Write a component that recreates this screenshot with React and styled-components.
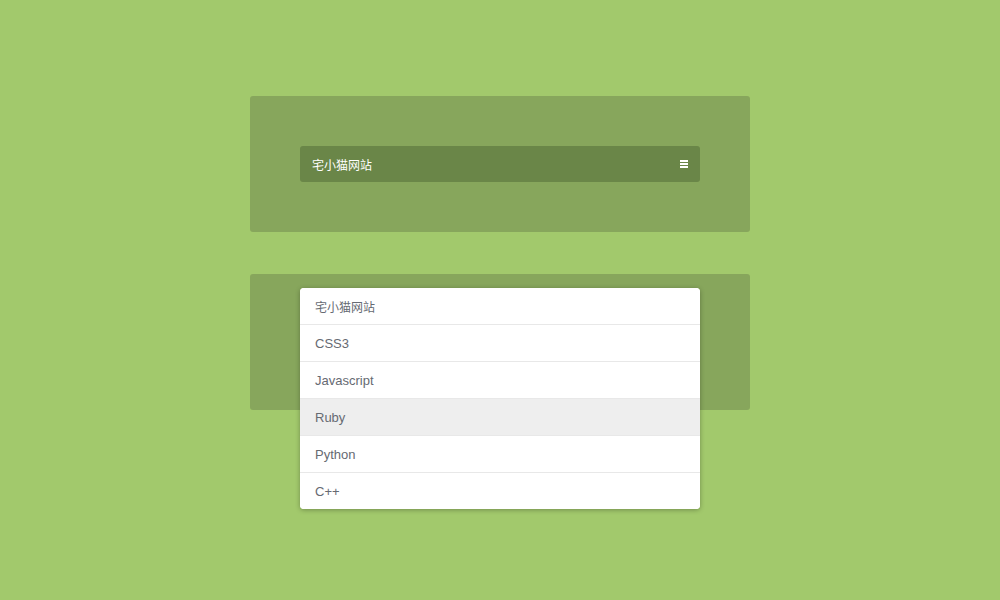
import React from 'react'
import styled, { createGlobalStyle } from 'styled-components'

const GlobalStyle = createGlobalStyle`
  html, body {
    margin: 0;
    padding: 0;
    background: #a2c96c;
    font-family: "Liberation Sans", Arial, "Noto Sans CJK SC", sans-serif;
  }
`

const Page = styled.div`
  width: 1000px;
  height: 600px;
  display: flex;
  flex-direction: column;
  align-items: center;
  padding-top: 96px;
  box-sizing: border-box;
  gap: 42px;
  overflow: hidden;
`

const Panel = styled.div`
  width: 500px;
  height: 136px;
  box-sizing: border-box;
  background: #87a65c;
  border-radius: 3px;
  padding: ${p => p.$top}px 50px 0;
  position: relative;
`

const NavBar = styled.div`
  height: 36px;
  background: #6a8648;
  border-radius: 3px;
  display: flex;
  align-items: center;
  justify-content: space-between;
  padding: 0 12px;
`

const Brand = styled.span`
  color: #fff;
  font-size: 12px;
  font-family: "Noto Sans CJK SC", sans-serif;
`

const Menu = styled.ul`
  list-style: none;
  margin: 0;
  padding: 0;
  background: #fff;
  border-radius: 4px;
  box-shadow: 0 1px 5px rgba(0, 0, 0, 0.3);
  overflow: hidden;
  position: relative;
  z-index: 2;
`

const Item = styled.li`
  height: 36px;
  display: flex;
  align-items: center;
  padding: 0 15px;
  color: #666a72;
  font-size: ${p => (p.$cjk ? '12px' : '13px')};
  font-family: ${p => (p.$cjk ? '"Noto Sans CJK SC", sans-serif' : '"Liberation Sans", Arial, sans-serif')};
  background: ${p => (p.$active ? '#eeeeee' : '#fff')};
  & + & {
    border-top: 1px solid #e8e8e8;
  }
`

const Burger = () => (
  <svg width="8" height="8" viewBox="0 0 8 8">
    <rect x="0" y="0" width="8" height="2" fill="#fff" />
    <rect x="0" y="3" width="8" height="2" fill="#fff" />
    <rect x="0" y="6" width="8" height="2" fill="#fff" />
  </svg>
)

const items = ['CSS3', 'Javascript', 'Ruby', 'Python', 'C++']

export default function App() {
  return (
    <>
      <GlobalStyle />
      <Page>
        <Panel $top={50}>
          <NavBar>
            <Brand>宅小猫网站</Brand>
            <Burger />
          </NavBar>
        </Panel>
        <Panel $top={14}>
          <Menu>
            <Item $cjk>宅小猫网站</Item>
            {items.map(name => (
              <Item key={name} $active={name === 'Ruby'}>{name}</Item>
            ))}
          </Menu>
        </Panel>
      </Page>
    </>
  )
}
